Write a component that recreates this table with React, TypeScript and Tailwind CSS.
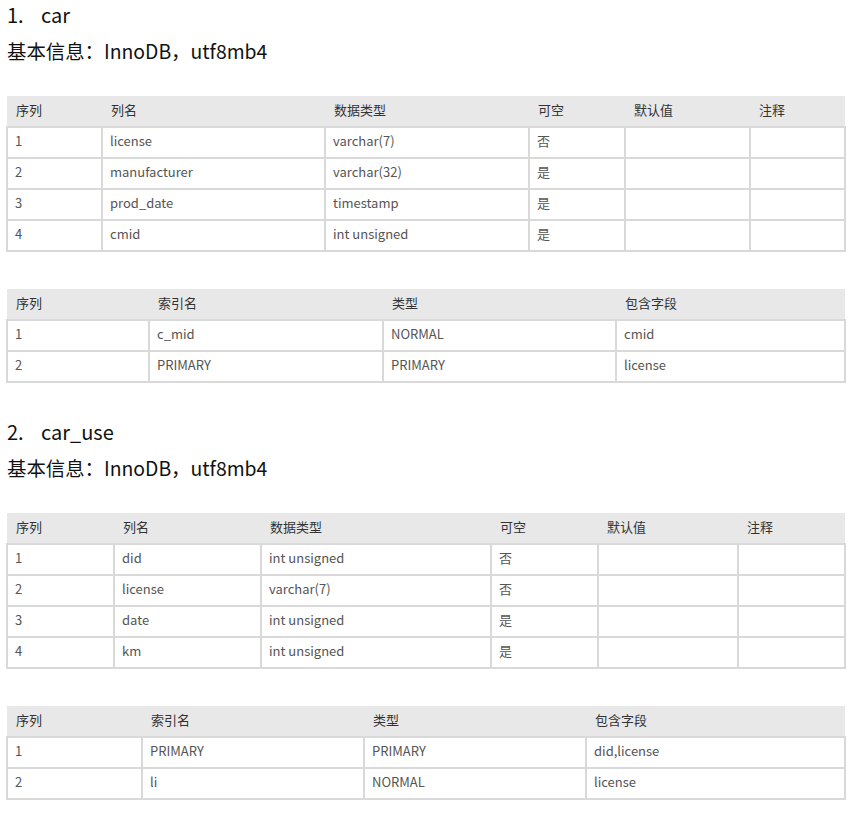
import React from "react";

interface TableSpec {
  widths: number[];
  head: string[];
  rows: string[][];
}

const font = { fontFamily: '"Noto Sans CJK SC", "Noto Sans", sans-serif' };

const tables: { num: string; title: string; info: string; cols: TableSpec; idx: TableSpec }[] = [
  {
    num: "1.",
    title: "car",
    info: "基本信息：InnoDB，utf8mb4",
    cols: {
      widths: [95, 223, 204, 96, 125, 95],
      head: ["序列", "列名", "数据类型", "可空", "默认值", "注释"],
      rows: [
        ["1", "license", "varchar(7)", "否", "", ""],
        ["2", "manufacturer", "varchar(32)", "是", "", ""],
        ["3", "prod_date", "timestamp", "是", "", ""],
        ["4", "cmid", "int unsigned", "是", "", ""],
      ],
    },
    idx: {
      widths: [142, 234, 233, 229],
      head: ["序列", "索引名", "类型", "包含字段"],
      rows: [
        ["1", "c_mid", "NORMAL", "cmid"],
        ["2", "PRIMARY", "PRIMARY", "license"],
      ],
    },
  },
  {
    num: "2.",
    title: "car_use",
    info: "基本信息：InnoDB，utf8mb4",
    cols: {
      widths: [107, 147, 230, 107, 140, 107],
      head: ["序列", "列名", "数据类型", "可空", "默认值", "注释"],
      rows: [
        ["1", "did", "int unsigned", "否", "", ""],
        ["2", "license", "varchar(7)", "否", "", ""],
        ["3", "date", "int unsigned", "是", "", ""],
        ["4", "km", "int unsigned", "是", "", ""],
      ],
    },
    idx: {
      widths: [135, 222, 222, 259],
      head: ["序列", "索引名", "类型", "包含字段"],
      rows: [
        ["1", "PRIMARY", "PRIMARY", "did,license"],
        ["2", "li", "NORMAL", "license"],
      ],
    },
  },
];

function DocTable({ spec }: { spec: TableSpec }) {
  return (
    <table className="w-[838px] table-fixed border-collapse text-[13px]" style={font}>
      <colgroup>
        {spec.widths.map((w, i) => (
          <col key={i} style={{ width: w }} />
        ))}
      </colgroup>
      <thead>
        <tr className="h-[31px] bg-[#e8e8e8]">
          {spec.head.map((h, i) => (
            <th key={i} className="px-[9px] pb-[2px] text-left font-normal text-[#333]">
              {h}
            </th>
          ))}
        </tr>
      </thead>
      <tbody>
        {spec.rows.map((r, ri) => (
          <tr key={ri} className="h-[31px]">
            {r.map((c, ci) => (
              <td key={ci} className="border-2 border-[#d9d9d9] px-[7px] pb-[3px] text-[#555]">
                {c}
              </td>
            ))}
          </tr>
        ))}
      </tbody>
    </table>
  );
}

export default function App() {
  return (
    <div className="min-h-screen bg-white px-[6px] pb-8 text-[#111]">
      {tables.map((t, i) => (
        <section key={i} className={i === 0 ? "" : "mt-[34px]"}>
          <h2 className="flex h-[30px] text-[20px] leading-[30px]" style={font}>
            <span className="w-[35px] pl-[1px]">{t.num}</span>
            <span>{t.title}</span>
          </h2>
          <p className="mt-[6px] h-[30px] pl-[1px] text-[19.4px] leading-[30px]" style={font}>
            {t.info}
          </p>
          <div className="mt-[30px]">
            <DocTable spec={t.cols} />
          </div>
          <div className="mt-[37px]">
            <DocTable spec={t.idx} />
          </div>
        </section>
      ))}
    </div>
  );
}
